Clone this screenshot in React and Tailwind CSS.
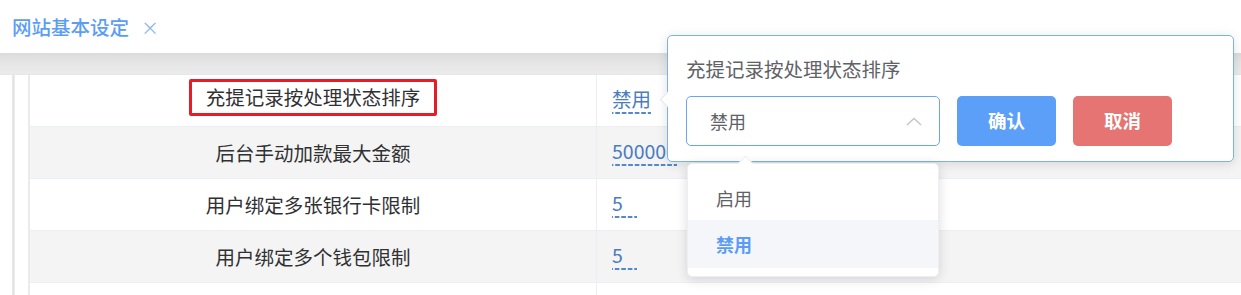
import React from 'react'

const rows = [
  { label: '充提记录按处理状态排序', value: '禁用', marked: true },
  { label: '后台手动加款最大金额', value: '500000' },
  { label: '用户绑定多张银行卡限制', value: '5' },
  { label: '用户绑定多个钱包限制', value: '5' },
  { label: '', value: '' },
]

function ChevronUp() {
  return (
    <svg width="16" height="9" viewBox="0 0 16 9" fill="none">
      <path d="M1 8L8 1.5L15 8" stroke="#c0c4cc" strokeWidth="1.3" />
    </svg>
  )
}

export default function App() {
  return (
    <div
      className="relative w-[1241px] h-[295px] overflow-hidden bg-white text-[#303133]"
      style={{ fontFamily: '"Noto Sans CJK SC", "Noto Sans", sans-serif' }}
    >
      {/* Tab header */}
      <div className="h-[53px] flex items-center pl-[12px] gap-[12px]">
        <span className="text-[19.5px] leading-none font-medium text-[#5b9df5]">网站基本设定</span>
        <span className="text-[18px] leading-none text-[#8ab8f3]">×</span>
      </div>
      <div className="h-[22px] bg-gradient-to-b from-[#dcdcdc] via-[#e6e6e6] to-[#ebebeb] border-b border-[#e4e7ed]" />

      {/* Body */}
      <div className="flex h-[220px]">
        <div className="w-[12px] shrink-0" />
        <div className="w-[3px] shrink-0 bg-gradient-to-r from-[#ececec] via-[#e2e2e2] to-[#f2f2f2]" />
        <div className="w-[13px] shrink-0" />
        <div className="w-[2px] shrink-0 bg-[#ebebeb]" />
        <div className="flex-1">
          {rows.map((r, i) => (
            <div
              key={i}
              className={`grid grid-cols-[567px_1fr] h-[52px] border-b border-[#ebeef5] ${i % 2 === 1 ? 'bg-[#f4f4f4]' : 'bg-white'}`}
            >
              <div className="flex items-center justify-center border-r border-[#ebeef5]">
                {r.marked ? (
                  <div className="flex items-center justify-center w-[248px] h-[37px] mt-[-7px] border-[3px] border-[#e51d26] rounded-[2px]">
                    <span className="text-[19.5px] leading-none">{r.label}</span>
                  </div>
                ) : (
                  <span className="text-[19.5px] leading-none">{r.label}</span>
                )}
              </div>
              <div className="flex items-center pl-[15px]">
                {r.value && (
                  <span className="min-w-[25px] pb-[3px] text-[19.5px] leading-[24px] text-[#4a7cc0] bg-[linear-gradient(to_right,#5587cc_65%,transparent_65%)] bg-[length:6.5px_2px] bg-repeat-x bg-bottom">
                    {r.value}
                  </span>
                )}
              </div>
            </div>
          ))}
        </div>
      </div>

      {/* Edit popover */}
      <div className="absolute left-[667px] top-[35px] w-[567px] h-[127px] bg-white border border-[#7ab4e2] rounded-[5px] shadow-[0_2px_12px_rgba(0,0,0,0.12)]">
        <div className="absolute left-[-6px] top-[58px] w-[11px] h-[11px] bg-white rotate-45 border-l border-b border-[#e4e7ed]" />
        <div className="pl-[18px] pt-[20px] text-[19.5px] leading-[26px] text-[#606266]">
          充提记录按处理状态排序
        </div>
        <div className="flex items-center gap-[17px] pl-[18px] mt-[14px]">
          <div className="w-[254px] h-[50px] border border-[#6aa5f0] rounded-[5px] flex items-center justify-between pl-[23px] pr-[17px]">
            <span className="text-[18px] text-[#606266]">禁用</span>
            <ChevronUp />
          </div>
          <div className="w-[99px] h-[50px] rounded-[5px] bg-[#5b9ff8] flex items-center justify-center text-white text-[18.5px] font-bold">
            确认
          </div>
          <div className="w-[99px] h-[50px] rounded-[5px] bg-[#e57472] flex items-center justify-center text-white text-[18.5px] font-bold">
            取消
          </div>
        </div>
      </div>

      {/* Dropdown options */}
      <div className="absolute left-[687px] top-[163px] w-[252px] h-[114px] bg-white rounded-[5px] shadow-[0_2px_12px_rgba(0,0,0,0.14)] border border-[#eceef2]">
        <div className="absolute left-[52px] top-[-6px] w-[11px] h-[11px] bg-white rotate-45 border-l border-t border-[#eceef2]" />
        <div className="relative pt-[12px]">
          <div className="h-[44px] flex items-center pl-[28px] text-[18px] text-[#606266]">启用</div>
          <div className="h-[48px] flex items-center pl-[28px] text-[18px] font-bold text-[#5b9df5] bg-[#f4f6fa]">禁用</div>
        </div>
      </div>
    </div>
  )
}
